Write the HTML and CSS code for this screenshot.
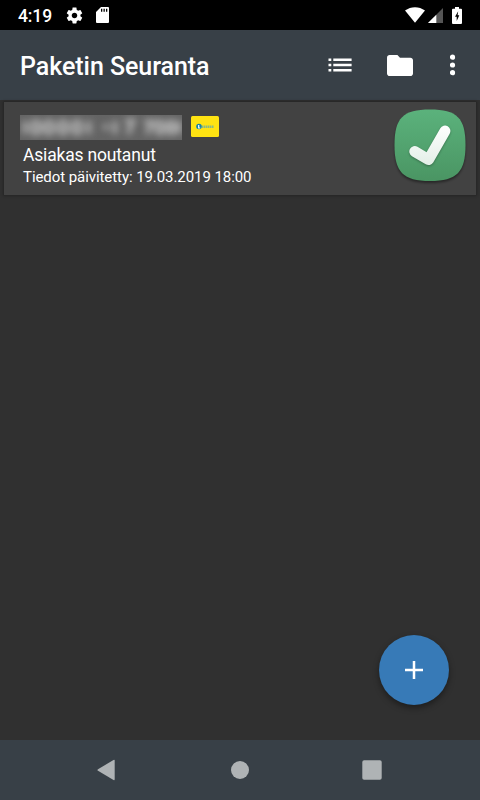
FILE: index.html
```html
<!DOCTYPE html>
<html lang="fi">
<head>
  <meta charset="UTF-8">
  <meta name="viewport" content="width=device-width, initial-scale=1.0">
  <title>Paketin Seuranta</title>
  <link rel="stylesheet" href="styles.css">
</head>
<body>
  <div class="status-bar">
    <span class="clock">4:19</span>
    <svg class="icon-settings" width="19" height="19" viewBox="0 0 24 24">
      <path d="M19.43 12.98c.04-.32.07-.64.07-.98s-.03-.66-.07-.98l2.11-1.65c.19-.15.24-.42.12-.64l-2-3.46c-.12-.22-.39-.3-.61-.22l-2.49 1c-.52-.4-1.08-.73-1.69-.98l-.38-2.65C14.46 2.18 14.25 2 14 2h-4c-.25 0-.46.18-.49.42l-.38 2.65c-.61.25-1.17.59-1.69.98l-2.49-1c-.23-.09-.49 0-.61.22l-2 3.46c-.13.22-.07.49.12.64l2.11 1.65c-.04.32-.07.65-.07.98s.03.66.07.98l-2.11 1.65c-.19.15-.24.42-.12.64l2 3.46c.12.22.39.3.61.22l2.49-1c.52.4 1.08.73 1.69.98l.38 2.65c.03.24.24.42.49.42h4c.25 0 .46-.18.49-.42l.38-2.65c.61-.25 1.17-.59 1.69-.98l2.49 1c.23.09.49 0 .61-.22l2-3.46c.12-.22.07-.49-.12-.64l-2.11-1.65zM12 15.5c-1.93 0-3.5-1.57-3.5-3.5s1.57-3.5 3.5-3.5 3.5 1.57 3.5 3.5-1.57 3.5-3.5 3.5z"/>
    </svg>
    <svg class="icon-sd" width="13" height="16" viewBox="0 0 13 16">
      <path d="M5 0h7q1 0 1 1v14q0 1-1 1H1q-1 0-1-1V5zM5 1.800v3h1.300v-3zM7.500 1.800v3h1.300v-3zM10 1.800v3h1.300v-3z" fill-rule="evenodd"/>
    </svg>
    <div class="status-right">
      <svg width="20" height="16" viewBox="0 0 20 16">
        <path d="M0 3.600C6-.9 14-.9 20 3.600L10 15.800z"/>
      </svg>
      <svg class="icon-signal" width="15" height="15" viewBox="0 0 15 15">
        <path class="signal-off" d="M15 0V15H0z"/>
        <path d="M8.300 6.700V15H0z"/>
      </svg>
      <svg class="icon-battery" width="10" height="17" viewBox="0 0 10 17">
        <path d="M3 0h4v1.700h2q1 0 1 1V16q0 1-1 1H1q-1 0-1-1V2.700q0-1 1-1h2z"/>
        <path class="bolt" d="M6.200 4.300L3 9.800h1.700v4.200L7.300 8.300H5.600z"/>
      </svg>
    </div>
  </div>

  <header class="app-bar">
    <h1>Paketin Seuranta</h1>
    <svg width="24" height="14" viewBox="0 0 24 14">
      <path d="M.5.400h2.800v2.600H.500zM5.300.400h18.300v2.600H5.300zM.5 5.700h2.800v2.600H.500zM5.300 5.700h18.300v2.600H5.300zM.5 11h2.800v2.600H.500zM5.300 11h18.300v2.600H5.300z"/>
    </svg>
    <svg class="icon-folder" width="26" height="21" viewBox="0 0 20 16" preserveAspectRatio="none">
      <path d="M8 0H2C.9 0 .01.9.01 2L0 14c0 1.100.9 2 2 2h16c1.100 0 2-.9 2-2V4c0-1.100-.9-2-2-2h-8z"/>
    </svg>
    <svg class="icon-more" width="6" height="22" viewBox="0 0 6 22">
      <circle cx="2.500" cy="3.200" r="2.600"/>
      <circle cx="2.500" cy="11" r="2.600"/>
      <circle cx="2.500" cy="18.700" r="2.600"/>
    </svg>
  </header>

  <main>
    <div class="parcel">
      <div class="parcel-info">
        <div class="parcel-top">
          <div class="code">
            <svg width="162" height="25" viewBox="0 0 162 25">
              <g class="code-marks">
                <path d="M5 6v13"/>
                <ellipse cx="16" cy="12.500" rx="4" ry="6"/>
                <ellipse cx="29" cy="12.500" rx="4" ry="6"/>
                <ellipse cx="43" cy="12.500" rx="4" ry="6"/>
                <ellipse cx="57" cy="12.500" rx="4" ry="6"/>
                <path d="M69 6v13M83 12h6M95 6v13M105 6h8l-5 13"/>
                <path d="M124 7h8l-5 12"/>
                <ellipse cx="140" cy="12.500" rx="3.500" ry="6"/>
                <ellipse cx="151" cy="12.500" rx="3" ry="6"/>
                <path d="M159 6v13"/>
              </g>
            </svg>
          </div>
          <svg class="carrier" width="28" height="21" viewBox="0 0 28 21">
            <rect class="carrier-bg" width="28" height="21" rx="1.500"/>
            <circle class="carrier-dot" cx="8" cy="10.500" r="2.800"/>
            <path class="carrier-mark" d="M7.700 9v3h1.500"/>
            <path class="carrier-name" d="M10.800 10.800h12.200"/>
          </svg>
        </div>
        <p class="state">Asiakas noutanut</p>
        <p class="updated">Tiedot päivitetty: 19.03.2019 18:00</p>
      </div>
      <svg class="delivered" width="80" height="82" viewBox="0 0 80 82">
        <defs>
          <linearGradient id="green" x1="0" y1="0" x2="0" y2="1">
            <stop offset="0" stop-color="#5bb27c"/>
            <stop offset="1" stop-color="#4a9563"/>
          </linearGradient>
          <linearGradient id="white" gradientUnits="userSpaceOnUse" x1="0" y1="20" x2="0" y2="60">
            <stop offset="0" stop-color="#ffffff"/>
            <stop offset="1" stop-color="#e3efe7"/>
          </linearGradient>
        </defs>
        <path class="tile" fill="url(#green)" d="M40 4.500C67 4.500 75.500 13 75.500 40S67 76 40 76 4.500 67 4.500 40 13 4.500 40 4.500z"/>
        <path class="tick" stroke="url(#white)" d="M24.700 46.500L38.500 54.700 55 26"/>
      </svg>
    </div>

    <button class="fab" aria-label="Lisää">
      <svg width="18" height="18" viewBox="0 0 18 18">
        <path d="M7.750 0h2.500v7.750H18v2.500h-7.750V18h-2.500v-7.750H0v-2.500h7.750z"/>
      </svg>
    </button>
  </main>

  <nav class="nav-bar">
    <svg width="20" height="22" viewBox="0 0 20 22">
      <path d="M1 10.200L16.500 1q1.200-.5 1.200.8v18.400q0 1.300-1.200.8L1 11.800q-1.200-.8 0-1.600z"/>
    </svg>
    <svg width="20" height="20" viewBox="0 0 20 20">
      <circle cx="10" cy="10" r="9"/>
    </svg>
    <svg width="20" height="20" viewBox="0 0 20 20">
      <rect x=".3" y=".3" width="19.400" height="19.400" rx="1.800"/>
    </svg>
  </nav>
</body>
</html>
```
FILE: styles.css
```css
* {
  box-sizing: border-box;
}
body {
  display: flex;
  flex-direction: column;
  width: 480px;
  height: 800px;
  margin: 0;
  overflow: hidden;
  background-color: #303030;
  color: #fff;
  font-family: Roboto, sans-serif;
}
svg {
  display: block;
  flex: none;
  fill: #fff;
}
h1, p {
  margin: 0;
}

/* Status bar */
.status-bar {
  display: flex;
  align-items: center;
  height: 30px;
  padding: 0 18px;
  background-color: #000;
}
.clock {
  width: 34px;
  padding-top: 1px;
  font-size: 17.5px;
  font-weight: 500;
  line-height: 30px;
  letter-spacing: -.1px;
  white-space: nowrap;
}
.icon-settings {
  margin-left: 13px;
}
.icon-sd {
  margin-left: 12px;
}
.status-right {
  display: flex;
  align-items: center;
  margin-left: auto;
}
.icon-signal {
  margin-left: 3px;
}
.signal-off {
  fill: #555;
}
.icon-battery {
  margin-left: 9px;
}
.bolt {
  fill: #000;
}

/* App bar */
.app-bar {
  display: flex;
  align-items: center;
  height: 70px;
  padding: 0 24px 0 20px;
  background-color: #384047;
}
.app-bar h1 {
  flex: 1;
  font-size: 25px;
  font-weight: 500;
  line-height: 30px;
  letter-spacing: -.05px;
  padding-top: 4px;
}
.icon-folder {
  margin-left: 35px;
}
.icon-more {
  margin-left: 37px;
}

/* Parcel list */
main {
  position: relative;
  flex: 1;
  padding: 2px 4px;
}
.parcel {
  display: flex;
  height: 93px;
  padding: 0 6px 0 16px;
  background-color: #424242;
  box-shadow: 0 0 2px 1px #252525;
}
.parcel-info {
  flex: 1;
  padding-top: 13px;
}
.parcel-top {
  display: flex;
  align-items: flex-start;
  height: 25px;
}
.code {
  width: 162px;
  height: 25px;
  overflow: hidden;
  background-color: #646464;
}
.code-marks {
  fill: none;
  stroke: #aaa;
  stroke-width: 5;
  filter: blur(3.5px);
}
.carrier {
  margin: 1px 0 0 9px;
}
.carrier-bg {
  fill: #ffe312;
}
.carrier-dot {
  fill: #1583a8;
}
.carrier-mark {
  fill: none;
  stroke: #fff;
  stroke-width: 1.2;
}
.carrier-name {
  stroke: #89b985;
  stroke-width: 2.6;
  stroke-dasharray: 1.5 .5;
}
.state {
  padding-left: 3px;
  font-size: 17.5px;
  line-height: 22px;
  letter-spacing: -.18px;
  margin-top: 4px;
}
.updated {
  padding-left: 3px;
  font-size: 15px;
  line-height: 20px;
  letter-spacing: -.07px;
  margin-top: 1px;
}
.delivered {
  margin-top: 3px;
}
.tile {
  filter: drop-shadow(0 2px 1px rgba(0, 0, 0, .4));
}
.tick {
  fill: none;
  stroke-width: 10.8;
  stroke-linecap: round;
  stroke-linejoin: round;
  filter: drop-shadow(0 1px 1px rgba(0, 0, 0, .3));
}

/* Floating add button */
.fab {
  position: absolute;
  right: 31px;
  bottom: 35px;
  display: flex;
  align-items: center;
  justify-content: center;
  width: 70px;
  height: 70px;
  padding: 0;
  border: none;
  border-radius: 50%;
  background-color: #377ab7;
  box-shadow: 0 3px 6px rgba(0, 0, 0, .4);
}

/* Navigation bar */
.nav-bar {
  display: flex;
  align-items: center;
  justify-content: space-between;
  height: 60px;
  padding: 0 98px 0 97px;
  background-color: #384047;
}
.nav-bar svg {
  fill: #afb3b5;
}
```
